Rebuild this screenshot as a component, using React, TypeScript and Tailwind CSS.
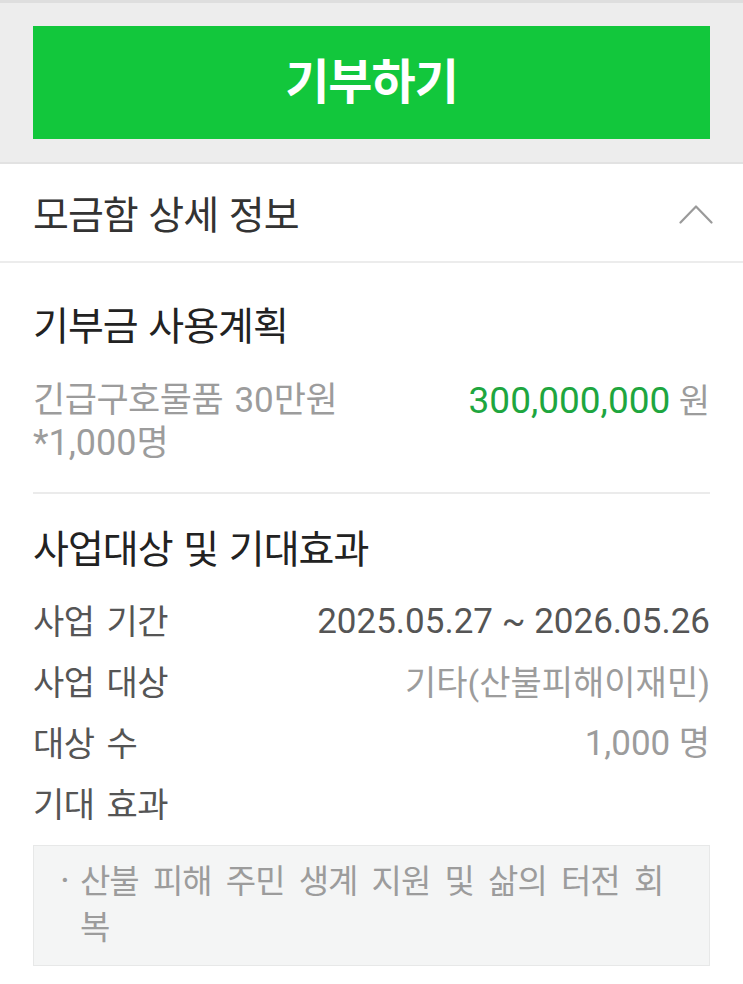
import React from "react";

const font = "font-['Roboto','Noto_Sans_CJK_KR',sans-serif]";

const rows = [
  { label: "사업 기간", value: "2025.05.27 ~ 2026.05.26", dark: true },
  { label: "사업 대상", value: "기타(산불피해이재민)", dark: false },
  { label: "대상 수", value: "1,000 명", dark: false },
  { label: "기대 효과", value: "", dark: false },
];

const ChevronUp = () => (
  <svg width="34" height="20" viewBox="0 0 34 20" fill="none">
    <polyline
      points="1.5,18.5 17,2.5 32.5,18.5"
      stroke="#9a9a9a"
      strokeWidth="2.2"
      strokeLinecap="round"
      strokeLinejoin="round"
    />
  </svg>
);

const App = () => {
  return (
    <div className={`w-full min-h-screen bg-white ${font}`}>
      <section className="bg-[#ededed] border-t-[3px] border-[#dedede] border-b-2 border-b-[#e2e2e2] px-[33px] pt-[23px] pb-[23px]">
        <button className="w-full h-[113px] bg-[#12c73c] flex items-center justify-center text-white text-[48px] font-bold tracking-[-1px] leading-none">
          기부하기
        </button>
      </section>

      <header className="h-[99px] px-[33px] flex items-center justify-between border-b-2 border-[#ececec]">
        <h2 className="mt-[7px] text-[39px] tracking-[-1px] [word-spacing:2px] text-[#333] leading-none">
          모금함 상세 정보
        </h2>
        <div className="mr-[-3px] mt-[2px]">
          <ChevronUp />
        </div>
      </header>

      <div className="px-[33px]">
        <div className="pt-[37px] pb-[27px] border-b-2 border-[#ebebeb]">
          <h3 className="text-[39px] leading-[54px] tracking-[-1px] [word-spacing:2px] text-[#222]">
            기부금 사용계획
          </h3>
          <div className="mt-[26px] flex justify-between items-start">
            <p className="w-[370px] text-[35px] leading-[42px] tracking-[-0.5px] [word-spacing:3px] text-[#9c9c9c]">
              긴급구호물품 <span className="text-[35px] tracking-normal">30</span>만원{" "}
              <span className="text-[36px] tracking-normal">*1,000</span>명
            </p>
            <p className="text-right leading-[42px] text-[#9c9c9c]">
              <span className="text-[37px] text-[#1ea63f]">300,000,000</span>
              <span className="text-[34px]"> 원</span>
            </p>
          </div>
        </div>

        <div className="pt-[29px] pb-[22px]">
          <h3 className="text-[39px] leading-[54px] tracking-[-1px] [word-spacing:2px] text-[#222]">
            사업대상 및 기대효과
          </h3>
          <div className="mt-[15px]">
            {rows.map((row) => (
              <div key={row.label} className="h-[61px] flex items-center justify-between">
                <span className="text-[34px] tracking-[-0.5px] [word-spacing:4px] text-[#555]">
                  {row.label}
                </span>
                {row.value && (
                  <span
                    className={
                      row.dark
                        ? "text-[35px] text-[#555]"
                        : "text-[34px] text-[#9c9c9c]"
                    }
                  >
                    {row.label === "대상 수" ? (
                      <>
                        <span className="text-[35px]">1,000</span> 명
                      </>
                    ) : (
                      row.value
                    )}
                  </span>
                )}
              </div>
            ))}
          </div>
          <div className="mt-[9px] bg-[#f4f5f5] border border-[#e7e8e8] pl-[26px] pr-[24px] pt-[13px] pb-[14px] flex">
            <span className="w-[20px] shrink-0 text-[38px] leading-[44px] text-[#9c9c9c]">·</span>
            <p className="flex-1 text-[33px] leading-[46px] tracking-[-1px] [word-spacing:7px] text-[#9c9c9c]">
              산불 피해 주민 생계 지원 및 삶의 터전 회복
            </p>
          </div>
        </div>
      </div>
    </div>
  );
};

export default App;
